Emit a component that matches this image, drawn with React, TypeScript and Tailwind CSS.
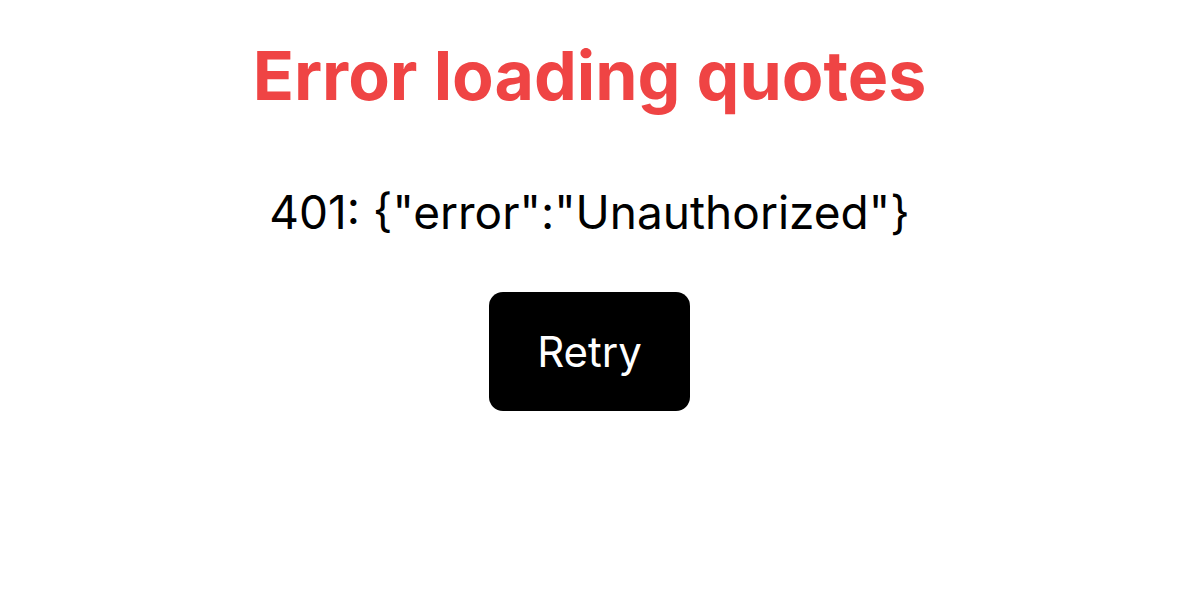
export default function App() {
  return (
    <div className="w-[1179px] h-[607px] bg-white flex flex-col items-center pt-[30px]" style={{ fontFamily: "Inter, 'Noto Sans', sans-serif" }}>
      <h1 className="text-[68px] leading-[90px] font-bold text-[#ef4444]">Error loading quotes</h1>
      <p className="mt-[62px] text-[46px] leading-[60px] text-black">401: {'{"error":"Unauthorized"}'}</p>
      <button className="mt-[50px] bg-black text-white rounded-[14px] px-[48px] h-[119px] text-[42px] leading-[52px]">Retry</button>
    </div>
  );
}
